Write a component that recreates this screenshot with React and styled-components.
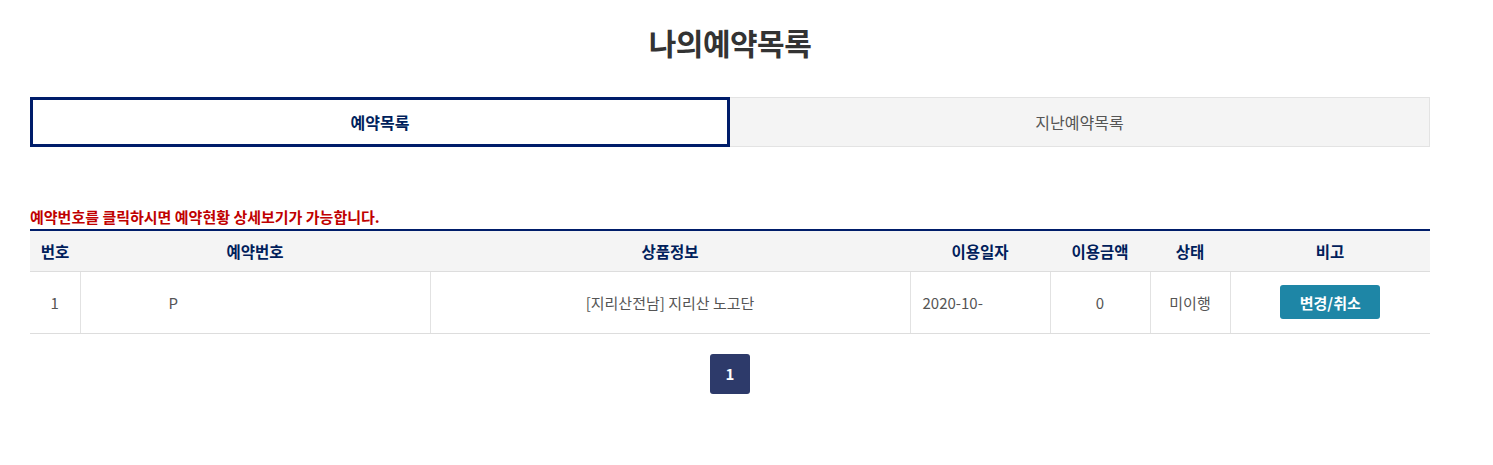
import React from "react";
import styled, { createGlobalStyle } from "styled-components";

const Global = createGlobalStyle`
  * { box-sizing: border-box; }
  body { margin: 0; background: #fff; font-family: "Noto Sans CJK KR", "Noto Sans", sans-serif; }
`;

const Page = styled.div`
  width: 1400px;
  margin-left: 30px;
  padding-top: 20px;
`;

const Title = styled.h2`
  margin: 0;
  text-align: center;
  font-size: 30px;
  font-weight: 700;
  color: #333;
  line-height: 44px;
  letter-spacing: -0.5px;
`;

const Tabs = styled.div`
  display: flex;
  margin-top: 33px;
  height: 50px;
`;

const Tab = styled.div`
  width: 700px;
  display: flex;
  align-items: center;
  justify-content: center;
  font-size: 16px;
  ${(p) =>
    p.$active
      ? `border: 3px solid #001d6a; background: #fff; color: #001f5c; font-weight: 700;`
      : `border: 1px solid #e3e3e3; border-left: none; background: #f4f4f4; color: #555; font-weight: 400;`}
`;

const Notice = styled.p`
  margin: 58px 0 0;
  font-size: 15px;
  font-weight: 700;
  color: #c00000;
  line-height: 24px;
`;

const Table = styled.table`
  width: 100%;
  border-collapse: collapse;
  border-top: 2px solid #001d6a;
  table-layout: fixed;
  font-size: 15px;
`;

const Th = styled.th`
  height: 41px;
  background: #f4f4f4;
  color: #00205b;
  font-weight: 700;
  font-size: 15.5px;
  border-bottom: 1px solid #ddd;
  text-align: center;
  padding: 0;
`;

const Td = styled.td`
  height: 62px;
  border-bottom: 1px solid #ddd;
  border-left: ${(p) => (p.$first ? "none" : "1px solid #e2e2e2")};
  color: #555;
  text-align: ${(p) => p.$align || "center"};
  padding: ${(p) => p.$pad || "0"};
`;

const Button = styled.button`
  width: 100px;
  height: 34px;
  border: none;
  border-radius: 3px;
  background: #1e86a6;
  color: #fff;
  font-family: inherit;
  font-size: 15px;
  font-weight: 700;
  cursor: pointer;
`;

const Pager = styled.div`
  display: flex;
  justify-content: center;
  margin-top: 20px;
`;

const PageBtn = styled.a`
  width: 40px;
  height: 40px;
  display: flex;
  align-items: center;
  justify-content: center;
  border-radius: 3px;
  background: #2d3a6a;
  color: #fff;
  font-size: 15px;
  font-weight: 700;
`;

export default function App() {
  return (
    <>
      <Global />
      <Page>
        <Title>나의예약목록</Title>
        <Tabs>
          <Tab $active>예약목록</Tab>
          <Tab>지난예약목록</Tab>
        </Tabs>
        <Notice>예약번호를 클릭하시면 예약현황 상세보기가 가능합니다.</Notice>
        <Table>
          <colgroup>
            <col style={{ width: 50 }} />
            <col style={{ width: 350 }} />
            <col style={{ width: 480 }} />
            <col style={{ width: 140 }} />
            <col style={{ width: 100 }} />
            <col style={{ width: 80 }} />
            <col style={{ width: 200 }} />
          </colgroup>
          <thead>
            <tr>
              <Th>번호</Th>
              <Th>예약번호</Th>
              <Th>상품정보</Th>
              <Th>이용일자</Th>
              <Th>이용금액</Th>
              <Th>상태</Th>
              <Th>비고</Th>
            </tr>
          </thead>
          <tbody>
            <tr>
              <Td $first>1</Td>
              <Td $align="left" $pad="0 0 0 88px">P</Td>
              <Td>[지리산전남] 지리산 노고단</Td>
              <Td $align="left" $pad="0 0 0 12px">2020-10-</Td>
              <Td>0</Td>
              <Td>미이행</Td>
              <Td>
                <Button>변경/취소</Button>
              </Td>
            </tr>
          </tbody>
        </Table>
        <Pager>
          <PageBtn>1</PageBtn>
        </Pager>
      </Page>
    </>
  );
}
